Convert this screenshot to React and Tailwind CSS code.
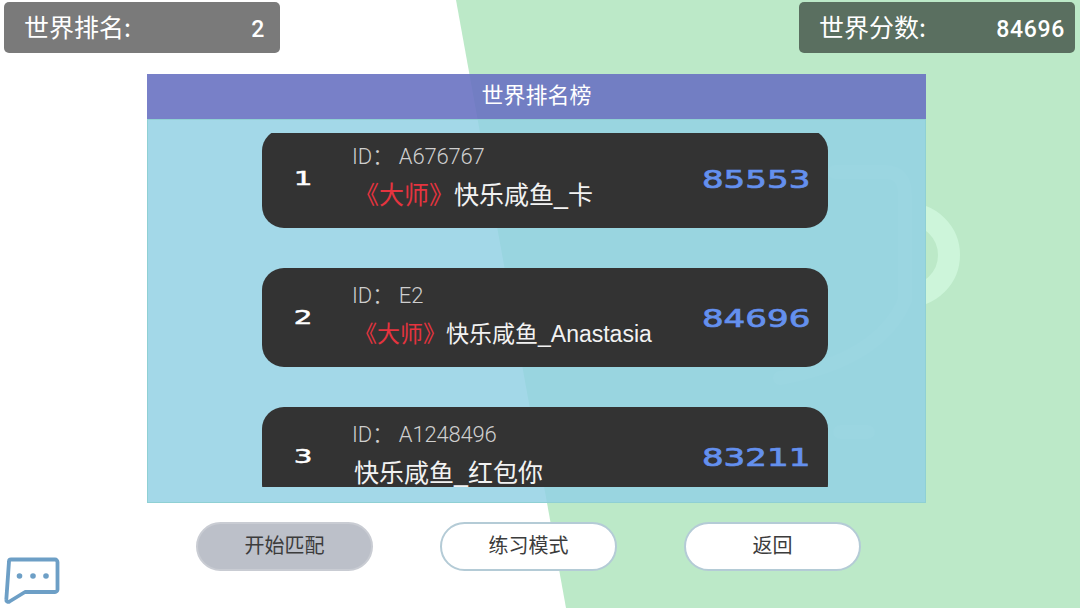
import React from 'react';

const cjk = "font-['Noto_Sans_CJK_SC','Noto_Sans',sans-serif]";

const players = [
    { rank: '1', id: 'A676767', title: '《大师》', name: '快乐咸鱼_卡', score: '85553', nameSize: 'text-[25px]' },
    { rank: '2', id: 'E2', title: '《大师》', name: '快乐咸鱼_Anastasia', score: '84696', nameSize: 'text-[23px]' },
    { rank: '3', id: 'A1248496', title: '', name: '快乐咸鱼_红包你', score: '83211', nameSize: 'text-[25px]' },
];

function StatBar({ label, value, className }) {
    return (
        <div className={`flex h-[51px] w-[276px] items-center justify-between rounded-[5px] bg-black/[0.52] pb-[3px] pl-5 text-white ${className}`}>
            <span className={`${cjk} text-[25px] leading-[36px]`}>{label}</span>
            <span className="mt-[8px] font-['Roboto',sans-serif] text-[23px] font-medium tracking-[0.7px]">{value}</span>
        </div>
    );
}

function PlayerRow({ player }) {
    return (
        <div className="flex h-[99px] shrink-0 items-center rounded-[22px] bg-[#333333] text-white">
            <div className="flex w-[82px] shrink-0 justify-center pl-[1px]">
                <span className="origin-center scale-x-[1.55] font-['DejaVu_Sans',sans-serif] text-[19px] text-white [-webkit-text-stroke:0.5px_#ffffff]">{player.rank}</span>
            </div>
            <div className="flex-1 pl-2">
                <div className="-mt-[3px] font-['Roboto','Noto_Sans_CJK_SC',sans-serif] text-[22px] leading-[28px] font-light tracking-[-0.2px] text-[#cfcfcf]">
                    ID： {player.id}
                </div>
                <div className={`mt-[4px] ml-[2px] h-[36px] leading-[36px] whitespace-nowrap text-[#f2f2f2] ${player.nameSize} ${cjk}`}>
                    {player.title && <span className="text-[#e5343f]">{player.title}</span>}
                    <span className="font-['Liberation_Sans','Noto_Sans_CJK_SC',sans-serif]">{player.name}</span>
                </div>
            </div>
            <div className="flex w-[150px] shrink-0 justify-end pt-[2px] pr-[18px]">
                <span className="origin-right scale-x-[1.42] font-['DejaVu_Sans',sans-serif] text-[24px] text-[#6490ee] [-webkit-text-stroke:0.7px_#6490ee]">{player.score}</span>
            </div>
        </div>
    );
}

function PillButton({ children, active }) {
    const look = active ? 'border-[#c9ccd3] bg-[#bcc0c9]' : 'border-[#b4cbd6] bg-white';
    return (
        <button className={`h-[49px] w-[177px] rounded-full border-2 pb-[4px] ${look} ${cjk} text-[20px] text-[#3c3c3c]`}>
            {children}
        </button>
    );
}

export default function App() {
    return (
        <div className="relative h-[608px] w-[1080px] overflow-hidden bg-white">
            {/* slanted green backdrop with the pale ornament that shows through the panel */}
            <div className="absolute inset-0 bg-[#bce9c8] [clip-path:polygon(456px_0,1080px_0,1080px_608px,566px_608px)]" />
            <svg className="absolute inset-0" width="1080" height="608" fill="none">
                <defs>
                    <clipPath id="ring-edge">
                        <rect x="926" y="190" width="60" height="130" />
                    </clipPath>
                </defs>
                <circle cx="908" cy="255" r="41" stroke="#cdf5da" strokeWidth="22" clipPath="url(#ring-edge)" />
                <g opacity="0.35">
                    <path d="M835 172H885Q905 172 905 195V300Q880 360 780 378" stroke="#d8f6e2" strokeWidth="14" strokeLinecap="round" />
                    <path d="M840 432H868" stroke="#d8f6e2" strokeWidth="14" strokeLinecap="round" />
                </g>
            </svg>

            <div className="relative flex h-full flex-col">
                <div className="flex shrink-0 items-start justify-between pt-[2px] pr-[5px] pl-[4px]">
                    <StatBar label="世界排名:" value="2" className="pr-[15px]" />
                    <StatBar label="世界分数:" value="84696" className="pr-[10px]" />
                </div>

                <div className="mt-[21px] ml-[147px] flex h-[429px] w-[779px] shrink-0 flex-col">
                    <div className={`flex h-[45px] items-center justify-center bg-[#6972c2]/90 pb-[7px] text-[22px] text-white ${cjk}`}>
                        世界排名榜
                    </div>
                    <div className="flex-1 border border-[#8fd0d4] bg-[#93d1e4]/85 pt-[13px] pr-[97px] pl-[114px]">
                        <div className="h-[354px] overflow-hidden">
                            <div className="-mt-[4px] flex flex-col gap-[40px]">
                                {players.map((player) => (
                                    <PlayerRow key={player.rank} player={player} />
                                ))}
                            </div>
                        </div>
                    </div>
                </div>

                <div className="mt-[19px] ml-[196px] flex shrink-0 gap-[67px]">
                    <PillButton active>开始匹配</PillButton>
                    <PillButton>练习模式</PillButton>
                    <PillButton>返回</PillButton>
                </div>
            </div>

            {/* floating chat button */}
            <svg className="absolute bottom-0 left-0" width="70" height="58" viewBox="0 0 70 58" fill="none">
                <path d="M11 9.5H55a2.5 2.5 0 0 1 2.5 2.5V39.5a2.5 2.5 0 0 1-2.5 2.5H25L9.5 51.5a2 2 0 0 1-3.2-1.8L9 11.5a2 2 0 0 1 2-2Z" stroke="#6d9fc6" strokeWidth="3.8" strokeLinejoin="round" />
                <circle cx="19.5" cy="26" r="2.8" fill="#6d9fc6" />
                <circle cx="33" cy="26" r="2.8" fill="#6d9fc6" />
                <circle cx="46" cy="26" r="2.8" fill="#6d9fc6" />
            </svg>
        </div>
    );
}
